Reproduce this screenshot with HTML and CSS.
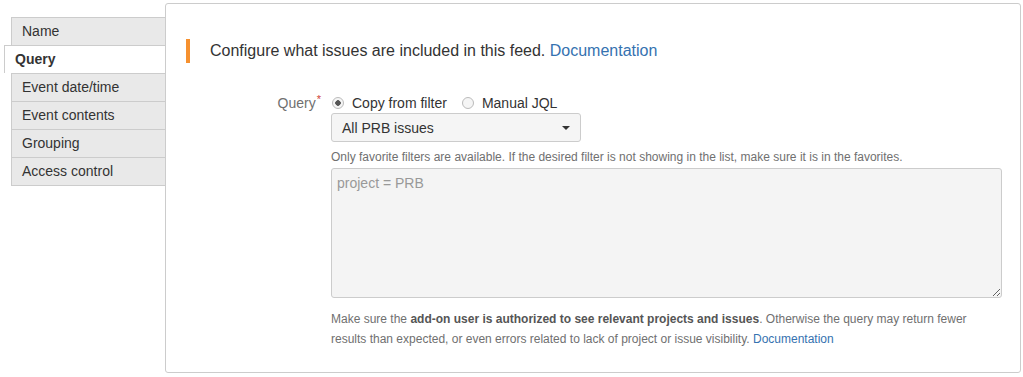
FILE: index.html
```html
<!DOCTYPE html>
<html>
<head>
    <meta charset="UTF-8">
    <title>Feed configuration</title>
    <link rel="stylesheet" href="styles.css">
</head>
<body>
<div id="page">
    <ul class="tabs">
        <li class="tab">Name</li>
        <li class="tab active">Query</li>
        <li class="tab">Event date/time</li>
        <li class="tab">Event contents</li>
        <li class="tab">Grouping</li>
        <li class="tab">Access control</li>
    </ul>
    <div class="panel">
        <div class="intro">Configure what issues are included in this feed. <a href="#">Documentation</a></div>
        <div class="field-group">
            <div class="field-label">Query<span class="req">*</span></div>
            <div class="field">
                <div class="radios">
                    <label><input type="radio" name="src" checked>Copy from filter</label>
                    <label><input type="radio" name="src">Manual JQL</label>
                </div>
                <div class="select">
                    <span>All PRB issues</span>
                    <span class="caret"></span>
                </div>
                <div class="hint">Only favorite filters are available. If the desired filter is not showing in the list, make sure it is in the favorites.</div>
                <textarea class="jql" placeholder="project = PRB"></textarea>
                <div class="note">Make sure the <strong>add-on user is authorized to see relevant projects and issues</strong>. Otherwise the query may return fewer results than expected, or even errors related to lack of project or issue visibility. <a href="#">Documentation</a></div>
            </div>
        </div>
    </div>
</div>
</body>
</html>
```

FILE: styles.css
```css
body {
    margin: 0;
    padding: 3px 2px 0 4px;
    font-family: "Liberation Sans", Arial, sans-serif;
    font-size: 14px;
    color: #333;
    background: #fff;
}
a {
    color: #3572b0;
    text-decoration: none;
}
#page {
    display: flex;
    align-items: flex-start;
}
.tabs {
    list-style: none;
    margin: 14px -1px 0 0;
    padding: 0;
    width: 162px;
    flex-shrink: 0;
    position: relative;
    z-index: 1;
}
.tab {
    box-sizing: border-box;
    height: 28px;
    line-height: 27px;
    margin-left: 7px;
    padding-left: 10px;
    background: #e9e9e9;
    border: 1px solid #ccc;
    border-bottom: none;
}
.tab:last-child {
    height: 29px;
    border-bottom: 1px solid #ccc;
}
.tab.active {
    margin-left: 0;
    background: #fff;
    font-weight: bold;
    padding-left: 10px;
}
.panel {
    flex: 1;
    min-width: 0;
    height: 370px;
    box-sizing: border-box;
    border: 1px solid #ccc;
    border-radius: 3px;
    padding: 35px 20px 0 20px;
}
.intro {
    border-left: 4px solid #f6912f;
    padding-left: 20px;
    font-size: 16px;
    line-height: 24px;
}
.field-group {
    display: flex;
    margin-top: 31px;
}
.field-label {
    width: 135px;
    flex-shrink: 0;
    text-align: right;
    color: #707070;
    line-height: 18px;
    margin-right: 10px;
}
.req {
    color: #d04437;
    font-size: 11px;
    vertical-align: top;
    position: relative;
    top: -4px;
    margin-left: 1px;
}
.field {
    flex: 1;
    padding-right: 18px;
}
.radios {
    display: flex;
    gap: 14px;
    line-height: 18px;
}
.radios label {
    display: flex;
    align-items: center;
}
.radios input {
    appearance: none;
    -webkit-appearance: none;
    width: 12px;
    height: 12px;
    margin: 0 8px 0 1px;
    border: 1px solid #bbb;
    border-radius: 50%;
    background: #f5f5f5;
    box-sizing: border-box;
}
.radios input:checked {
    background: radial-gradient(circle, #555 0, #555 2.5px, #f5f5f5 3px);
}
.select {
    display: flex;
    align-items: center;
    justify-content: space-between;
    box-sizing: border-box;
    width: 250px;
    height: 29px;
    margin-top: 1px;
    padding: 0 10px;
    border: 1px solid #ccc;
    border-radius: 3px;
    background: #f5f5f5;
}
.caret {
    width: 0;
    height: 0;
    border-left: 4px solid transparent;
    border-right: 4px solid transparent;
    border-top: 4px solid #333;
}
.hint {
    margin-top: 8px;
    font-size: 12px;
    line-height: 14px;
    color: #707070;
}
.jql {
    display: block;
    box-sizing: border-box;
    width: 671px;
    height: 130px;
    margin-top: 4px;
    padding: 6px 5px;
    border: 1px solid #ccc;
    border-radius: 3px;
    background: #f4f4f4;
    font-family: "Liberation Sans", Arial, sans-serif;
    font-size: 14px;
}
.jql::placeholder {
    color: #999;
}
.note {
    margin-top: 11px;
    font-size: 12px;
    line-height: 20px;
    color: #707070;
    max-width: 660px;
}
.note strong {
    color: #555;
}
```
